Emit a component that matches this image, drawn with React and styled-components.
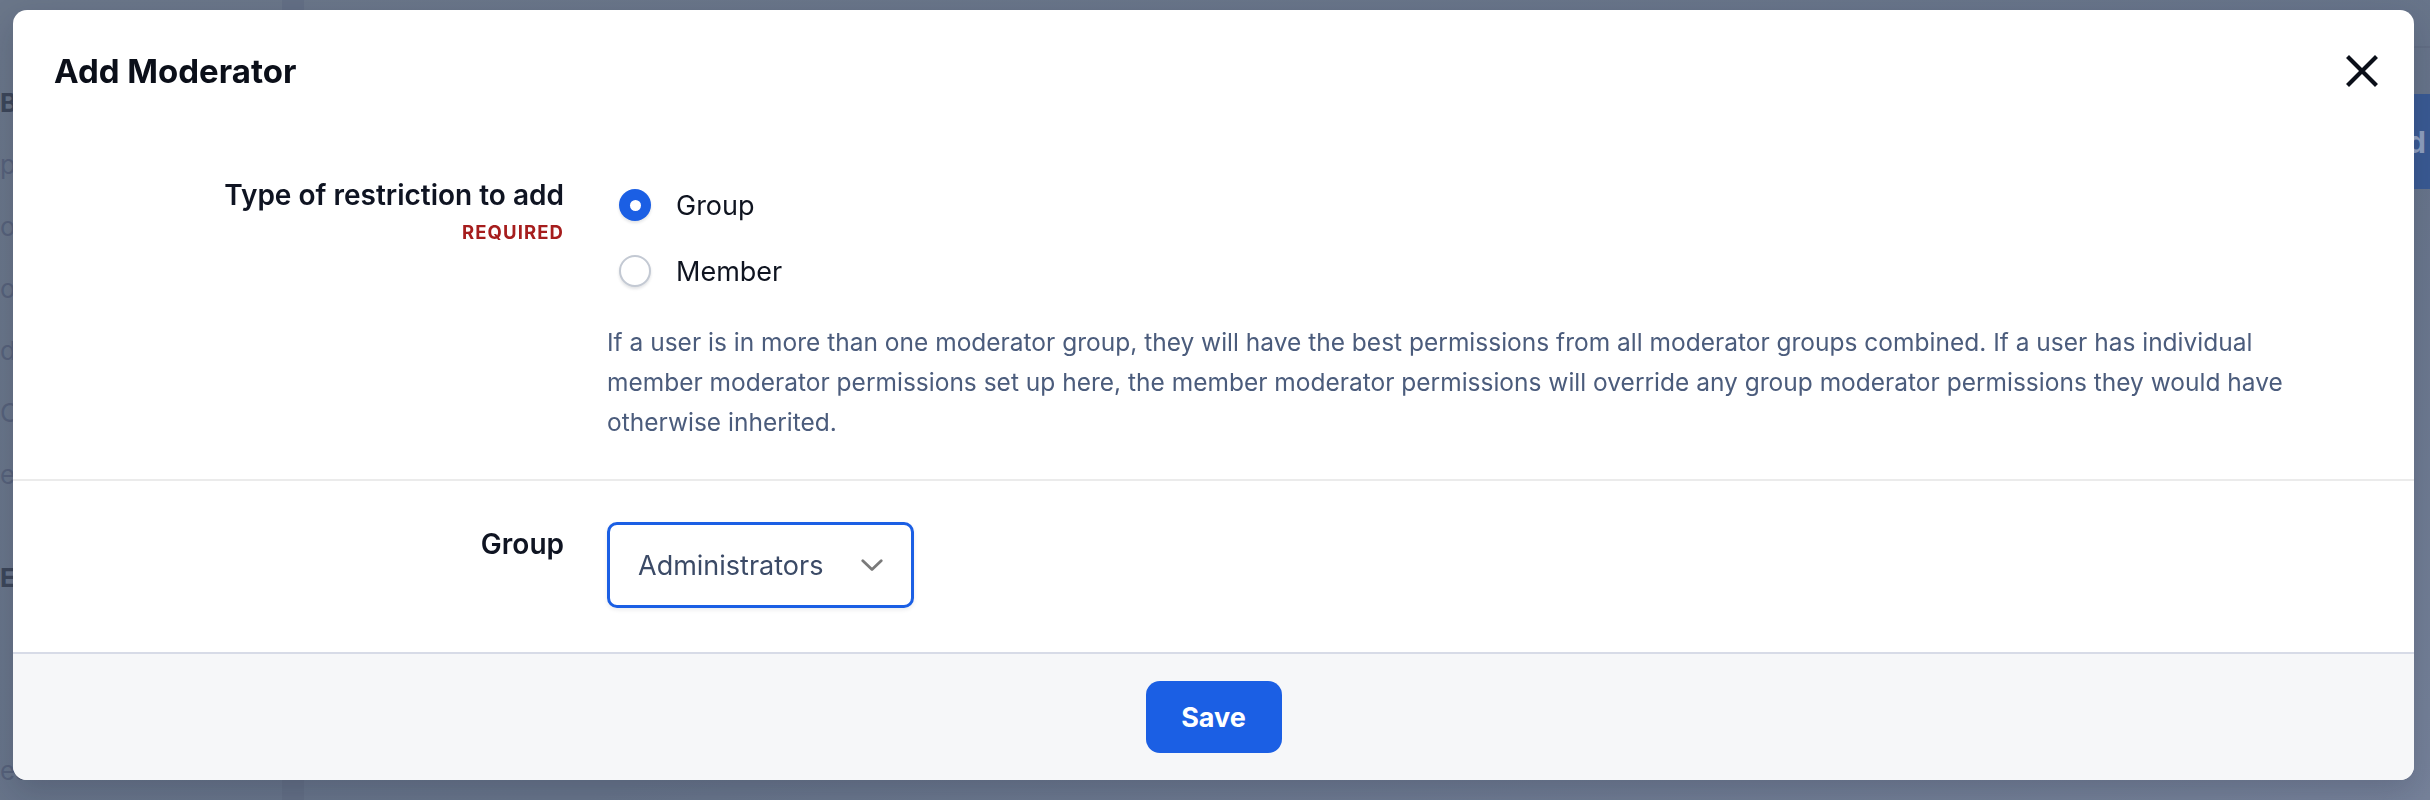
import React from "react";
import styled, { createGlobalStyle } from "styled-components";

const GlobalStyle = createGlobalStyle`
  html, body { margin: 0; padding: 0; }
  body {
    width: 2430px;
    height: 800px;
    overflow: hidden;
    font-family: Inter, "Noto Sans", "Liberation Sans", sans-serif;
    background: #6b778b;
  }
  * { box-sizing: border-box; }
`;

/* ---------- dimmed page behind the dialog ---------- */
const Page = styled.div`
  display: flex;
  width: 2430px;
  height: 800px;
  background: linear-gradient(160deg, #6a7689 0%, #67748a 60%, #76829a 100%);
`;

const Sidebar = styled.aside`
  flex: none;
  width: 304px;
  display: flex;
  flex-direction: column;
  gap: 31px;
  padding: 87px 0 0 0;
  border-right: 22px solid #636f85;
  font-size: 26px;
  line-height: 31px;
`;

const SideItem = styled.div`
  font-weight: ${(p) => (p.$strong ? 700 : 400)};
  color: ${(p) => (p.$strong ? "#3c4659" : "#56617a")};
  margin-top: ${(p) => p.$space || 0}px;
  white-space: nowrap;
`;

const Main = styled.main`
  flex: 1;
  display: flex;
  flex-direction: column;
`;

const TopBar = styled.div`
  height: 48px;
  border-bottom: 2px solid #626e84;
`;

const ActionRow = styled.div`
  display: flex;
  justify-content: flex-end;
  padding-top: 46px;
`;

const GhostButton = styled.div`
  height: 95px;
  width: 160px;
  background: #3a5a93;
  color: #8fa0c0;
  font-size: 30px;
  font-weight: 700;
  display: flex;
  align-items: center;
  justify-content: flex-end;
  padding-right: 4px;
`;

/* ---------- dialog ---------- */
const Overlay = styled.div`
  position: fixed;
  inset: 0;
  display: flex;
  padding: 10px 16px 20px 13px;
`;

const Modal = styled.div`
  flex: 1;
  display: flex;
  flex-direction: column;
  background: #ffffff;
  border-radius: 14px;
  overflow: hidden;
  box-shadow: 0 12px 32px rgba(15, 23, 42, 0.18);
`;

const Header = styled.header`
  display: flex;
  align-items: center;
  justify-content: space-between;
  padding: 41px 36px 0 41px;
`;

const Title = styled.h2`
  margin: 0;
  font-size: 33px;
  line-height: 40px;
  font-weight: 700;
  color: #0b0f19;
`;

const CloseButton = styled.button`
  width: 32px;
  height: 32px;
  padding: 0;
  border: 0;
  background: none;
  display: flex;
  color: #0b0f19;
  cursor: pointer;
`;

const Row = styled.section`
  display: grid;
  grid-template-columns: 551px 1fr;
  column-gap: 43px;
  padding: ${(p) => p.$top}px 60px ${(p) => p.$bottom}px 0;
  border-bottom: 2px solid ${(p) => p.$line || "#ebebeb"};
`;

const LabelCell = styled.div`
  text-align: right;
  padding-top: ${(p) => p.$offset || 0}px;
`;

const FieldLabel = styled.div`
  font-size: 28px;
  line-height: 38px;
  font-weight: 600;
  color: #0f1422;
`;

const Required = styled.div`
  margin-top: 6px;
  font-size: 18.5px;
  line-height: 24px;
  font-weight: 700;
  letter-spacing: 1.1px;
  color: #a61d1d;
`;

const Content = styled.div`
  display: flex;
  flex-direction: column;
  align-items: flex-start;
`;

const RadioGroup = styled.div`
  display: flex;
  flex-direction: column;
  gap: 8px;
`;

const Option = styled.label`
  height: 58px;
  display: flex;
  align-items: center;
  gap: 25px;
  padding-left: 12px;
  font-size: 27px;
  color: #0f1420;
  cursor: pointer;
`;

const RadioDot = styled.span`
  width: 32px;
  height: 32px;
  border-radius: 50%;
  flex: none;
  display: flex;
  align-items: center;
  justify-content: center;
  background: ${(p) => (p.$checked ? "#1b5fe4" : "#ffffff")};
  border: ${(p) => (p.$checked ? "none" : "2.5px solid #c3c9d3")};
  box-shadow: 0 2px 3px rgba(15, 23, 42, 0.12);

  &::after {
    content: "";
    width: 11px;
    height: 11px;
    border-radius: 50%;
    background: #ffffff;
    display: ${(p) => (p.$checked ? "block" : "none")};
  }
`;

const Help = styled.p`
  margin: 22px 0 0 0;
  max-width: 1720px;
  font-size: 24.5px;
  line-height: 40px;
  color: #4b5c7c;
`;

const Select = styled.button`
  width: 307px;
  height: 86px;
  border: 3px solid #1b5fe4;
  border-radius: 10px;
  background: #ffffff;
  display: flex;
  align-items: center;
  justify-content: space-between;
  padding: 0 28px 0 28px;
  font-family: inherit;
  font-size: 27px;
  color: #3b4a66;
  box-shadow: 0 2px 4px rgba(15, 23, 42, 0.08);
  cursor: pointer;
`;

const Footer = styled.footer`
  flex: 1;
  display: flex;
  align-items: center;
  justify-content: center;
  background: #f6f7f9;
  border-top: 2px solid #d7dbe7;
`;

const SaveButton = styled.button`
  width: 136px;
  height: 72px;
  border: 0;
  border-radius: 14px;
  background: #1b5fe4;
  color: #ffffff;
  font-family: inherit;
  font-size: 27px;
  font-weight: 700;
  cursor: pointer;
`;

function CloseIcon() {
  return (
    <svg width="32" height="32" viewBox="0 0 32 32" fill="none">
      <path
        d="M3 3 L29 29 M29 3 L3 29"
        stroke="currentColor"
        strokeWidth="4.2"
        strokeLinecap="square"
      />
    </svg>
  );
}

function Chevron() {
  return (
    <svg width="22" height="13" viewBox="0 0 22 13" fill="none">
      <path
        d="M1.8 1.8 L11 10.6 L20.2 1.8"
        stroke="#7a7a7a"
        strokeWidth="2.8"
        strokeLinecap="round"
        strokeLinejoin="round"
      />
    </svg>
  );
}

export default function App() {
  const [kind, setKind] = React.useState("group");
  return (
    <>
      <GlobalStyle />
      <Page>
        <Sidebar>
          <SideItem $strong>Bans</SideItem>
          <SideItem>pending</SideItem>
          <SideItem>osts</SideItem>
          <SideItem>o</SideItem>
          <SideItem>drafts</SideItem>
          <SideItem>Oc</SideItem>
          <SideItem>es</SideItem>
          <SideItem $strong $space={41}>EV</SideItem>
          <SideItem $space={131}>es</SideItem>
        </Sidebar>
        <Main>
          <TopBar />
          <ActionRow>
            <GhostButton>Add</GhostButton>
          </ActionRow>
        </Main>
      </Page>

      <Overlay>
        <Modal role="dialog" aria-label="Add Moderator">
          <Header>
            <Title>Add Moderator</Title>
            <CloseButton aria-label="Close">
              <CloseIcon />
            </CloseButton>
          </Header>

          <Row $top={85} $bottom={37}>
            <LabelCell>
              <FieldLabel>Type of restriction to add</FieldLabel>
              <Required>REQUIRED</Required>
            </LabelCell>
            <Content>
              <RadioGroup>
                <Option onClick={() => setKind("group")}>
                  <RadioDot $checked={kind === "group"} />
                  Group
                </Option>
                <Option onClick={() => setKind("member")}>
                  <RadioDot $checked={kind === "member"} />
                  Member
                </Option>
              </RadioGroup>
              <Help>
                If a user is in more than one moderator group, they will have the best permissions from all
                moderator groups combined. If a user has individual member moderator permissions set up here, the
                member moderator permissions will override any group moderator permissions they would have
                otherwise inherited.
              </Help>
            </Content>
          </Row>

          <Row $top={41} $bottom={42} $line="transparent">
            <LabelCell $offset={3}>
              <FieldLabel>Group</FieldLabel>
            </LabelCell>
            <Content>
              <Select>
                Administrators
                <Chevron />
              </Select>
            </Content>
          </Row>

          <Footer>
            <SaveButton>Save</SaveButton>
          </Footer>
        </Modal>
      </Overlay>
    </>
  );
}
